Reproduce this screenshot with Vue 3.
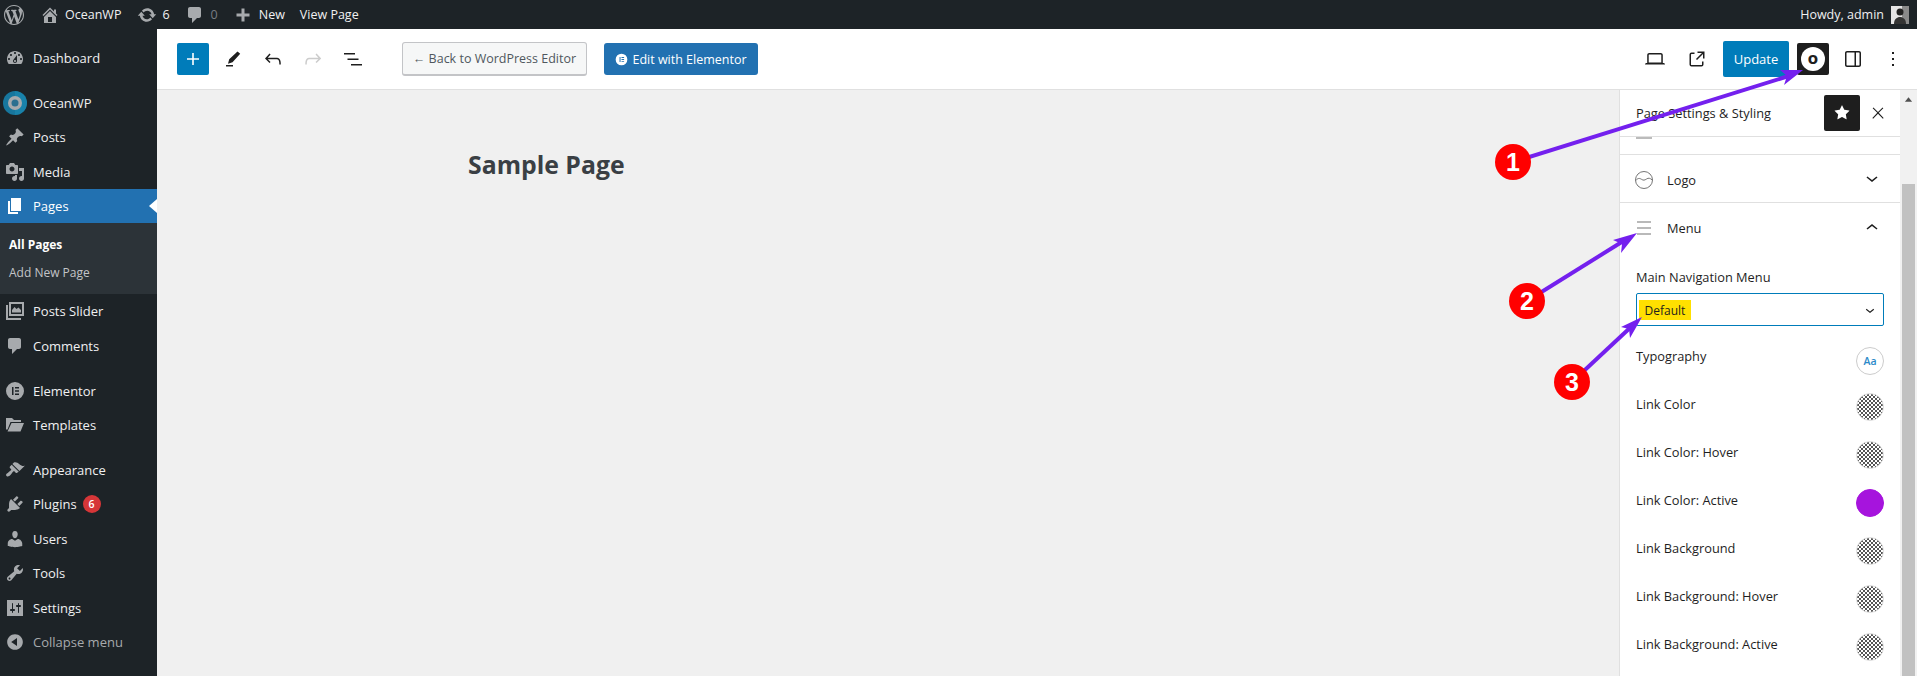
<script setup>
const ico = {
  dash: 'M3.76 16h12.48c1.1-1.37 1.76-3.11 1.76-5 0-4.42-3.58-8-8-8s-8 3.58-8 8c0 1.89.66 3.63 1.76 5zM10 4c.55 0 1 .45 1 1s-.45 1-1 1-1-.45-1-1 .45-1 1-1zM6 6c.55 0 1 .45 1 1s-.45 1-1 1-1-.45-1-1 .45-1 1-1zm8 0c.55 0 1 .45 1 1s-.45 1-1 1-1-.45-1-1 .45-1 1-1zm-5.37 5.55L12 7v6c0 1.1-.9 2-2 2s-2-.9-2-2c0-.57.24-1.08.63-1.45zM4 10c.55 0 1 .45 1 1s-.45 1-1 1-1-.45-1-1 .45-1 1-1zm12 0c.55 0 1 .45 1 1s-.45 1-1 1-1-.45-1-1 .45-1 1-1zm-5 3c0-.55-.45-1-1-1s-1 .45-1 1 .45 1 1 1 1-.45 1-1z',
  pin: 'M10.44 3.02l1.82-1.82 6.36 6.35-1.83 1.82c-1.05-.68-2.48-.57-3.41.36l-.75.75c-.92.93-1.04 2.35-.35 3.41l-1.83 1.82-2.41-2.41-2.8 2.79c-.42.42-3.38 2.71-3.8 2.29s1.86-3.39 2.28-3.81l2.79-2.79L4.1 9.36l1.83-1.82c1.05.69 2.48.57 3.4-.36l.75-.75c.93-.92 1.05-2.35.36-3.41z',
  media: 'M13 11V4c0-.55-.45-1-1-1h-1.67L9 1H5L3.67 3H2c-.55 0-1 .45-1 1v7c0 .55.45 1 1 1h10c.55 0 1-.45 1-1zM7 4.5c1.38 0 2.5 1.12 2.5 2.5S8.38 9.5 7 9.5 4.5 8.38 4.5 7 5.62 4.5 7 4.5zM14 6h5v10.5c0 1.38-1.12 2.5-2.5 2.5S14 17.88 14 16.5s1.12-2.5 2.5-2.5c.17 0 .34.02.5.05V9h-3V6zm-4 8.05V13h2v3.5c0 1.38-1.12 2.5-2.5 2.5S7 17.88 7 16.5 8.12 14 9.5 14c.17 0 .34.02.5.05z',
  page: 'M6 15V2h10v13H6zm-1 1h8v2H3V5h2v11z',
  slider: 'M4 1h15v14H4zM6 3v10h11V3zM7 9l2.500-3 2 2 2-1.500 2.500 2.500v2.500H7zM1 4h2v13h13v2H1z',
  comment: 'M5 2h9c1.100 0 2 .9 2 2v7c0 1.100-.9 2-2 2h-2l-5 5v-5H5c-1.100 0-2-.9-2-2V4c0-1.100.9-2 2-2z',
  elementor: 'M10 1a9 9 0 1 0 0 18 9 9 0 0 0 0-18zM7 6h1.500v8H7zM10 6h4v1.500h-4zM10 9.250h4v1.500h-4zM10 12.500h4V14h-4z',
  folder: 'M1 3h6l2 2h7v2H5.500L2.500 14.500H1zM6.500 8H19l-3.500 8.500H2.500z',
  brush: 'M14.480 11.060L7.410 3.990l1.500-1.500c.5-.56 2.300-.47 3.510.32 1.210.8 1.430 1.280 2.910 2.100 1.180.64 2.450 1.260 4.450.85zm-.71.71L6.700 4.700 4.930 6.470c-.39.39-.39 1.020 0 1.410l1.060 1.060c.39.39.39 1.030 0 1.420-.6.6-1.430 1.110-2.210 1.690-.35.26-.7.53-1.010.84C1.430 13.230.4 14.870 1.560 16.020c1.150 1.160 2.790.13 4.100-1.210.3-.3.58-.65.84-1 .58-.78 1.090-1.610 1.690-2.210.39-.39 1.030-.39 1.420 0l1.060 1.060c.39.39 1.020.39 1.410 0z',
  plug: 'M13.110 4.360L9.870 7.600 8 5.730l3.240-3.240c.35-.34 1.050-.2 1.560.32.52.51.66 1.210.31 1.550zm-8 1.770l.91-1.120 9.010 9.010-1.190.84c-.71.71-2.630 1.160-3.820 1.160H6.140L4.900 17.260c-.59.59-1.540.59-2.120 0-.59-.58-.59-1.530 0-2.120l1.240-1.240v-3.880c0-1.130.4-3.190 1.090-3.890zm7.260 3.970l3.240-3.240c.34-.35 1.040-.21 1.550.31.52.51.66 1.210.31 1.550l-3.240 3.250z',
  user: 'M10 9.250c-2.270 0-2.730-3.440-2.730-3.440C7 4.020 7.820 2 9.970 2c2.160 0 2.980 2.020 2.710 3.810 0 0-.41 3.440-2.680 3.440zm0 2.570L12.720 10c2.390 0 4.520 2.330 4.520 4.530v2.490s-3.650 1.130-7.240 1.130c-3.650 0-7.240-1.130-7.240-1.130v-2.490c0-2.250 1.940-4.480 4.470-4.480z',
  tool: 'M16.680 9.770c-1.340 1.340-3.300 1.670-4.950.99l-5.410 6.520c-.99.99-2.590.99-3.580 0s-.99-2.590 0-3.570l6.520-5.420c-.68-1.650-.35-3.610.99-4.950 1.280-1.280 3.120-1.620 4.720-1.060l-2.890 2.890 2.820 2.820 2.860-2.870c.53 1.580.18 3.390-1.080 4.650zM3.810 16.210c.4.39 1.040.39 1.430 0 .4-.4.4-1.040 0-1.430-.39-.4-1.030-.4-1.430 0-.39.39-.39 1.030 0 1.430z',
  settings: 'M2 2h16v16H2zM8 11V5.500c0-.28-.22-.5-.5-.5s-.5.22-.5.5V11H6c-.55 0-1 .45-1 1s.45 1 1 1h1v1.500c0 .28.22.5.5.5s.5-.22.5-.5V13h1c.55 0 1-.45 1-1s-.45-1-1-1zm5-2v5.500c0 .28.22.5.5.5s.5-.22.5-.5V9h1c.55 0 1-.45 1-1s-.45-1-1-1h-1V5.500c0-.28-.22-.5-.5-.5s-.5.22-.5.5V7h-1c-.55 0-1 .45-1 1s.45 1 1 1z',
  collapse: 'M10 2.160c4.330 0 7.840 3.510 7.840 7.840s-3.510 7.840-7.840 7.840S2.160 14.330 2.160 10 5.710 2.160 10 2.160zm2 11.720V6.120L6.180 9.970z'
}
const wp = 'M20 10c0-5.510-4.490-10-10-10C4.480 0 0 4.490 0 10c0 5.520 4.480 10 10 10 5.510 0 10-4.480 10-10zM7.780 15.370L4.370 6.220c.55-.02 1.170-.08 1.170-.08.5-.06.44-1.130-.06-1.110 0 0-1.450.11-2.370.11-.18 0-.37 0-.58-.01C4.120 2.690 6.870 1.110 10 1.110c2.330 0 4.450.87 6.050 2.340-.68-.11-1.650.39-1.650 1.580 0 .74.45 1.360.9 2.100.35.61.55 1.360.55 2.460 0 1.490-1.400 5-1.400 5l-3.030-8.370c.54-.02.82-.17.82-.17.5-.05.44-1.250-.06-1.220 0 0-1.440.12-2.380.12-.87 0-2.330-.12-2.330-.12-.5-.03-.56 1.200-.06 1.220l.92.08 1.260 3.410zM17.410 10c.24-.64.74-1.870.43-4.250.7 1.290 1.050 2.710 1.050 4.250 0 3.290-1.730 6.240-4.400 7.780.97-2.590 1.940-5.200 2.920-7.780zM6.100 18.090C3.120 16.650 1.110 13.530 1.110 10c0-1.300.23-2.480.72-3.590C3.250 10.300 4.670 14.200 6.100 18.090zm4.030-6.630l2.580 6.980c-.86.29-1.760.45-2.710.45-.79 0-1.570-.11-2.290-.33.81-2.380 1.620-4.740 2.420-7.100z'
const home = 'M16 8.500l1.530 1.530-1.060 1.060L10 4.620l-6.470 6.470-1.060-1.060L10 2.500l4 4v-2h2v4zm-6-2.460l6 5.990V18H4v-5.970zM12 17v-5H8v5h4z'
const update = 'M10.200 3.280c3.530 0 6.430 2.610 6.920 6h2.080l-3.500 4-3.500-4h2.320c-.45-1.970-2.210-3.450-4.320-3.450-1.450 0-2.730.71-3.540 1.780L4.950 5.660C6.230 4.200 8.110 3.280 10.200 3.280zm-.4 13.440c-3.520 0-6.430-2.610-6.920-6H.8l3.500-4c1.170 1.330 2.330 2.670 3.500 4H5.480c.45 1.970 2.210 3.450 4.320 3.450 1.450 0 2.730-.71 3.540-1.780l1.710 1.950c-1.280 1.460-3.150 2.380-5.250 2.380z'
const plusBar = 'M3.500 8.500h5v-5h3v5h5v3h-5v5h-3v-5h-5z'

const top = [
  { label: 'Dashboard', icon: ico.dash },
  { label: 'OceanWP', ocean: true, gap: true },
  { label: 'Posts', icon: ico.pin },
  { label: 'Media', icon: ico.media },
  { label: 'Pages', icon: ico.page, active: true }
]
const bottom = [
  { label: 'Posts Slider', icon: ico.slider },
  { label: 'Comments', icon: ico.comment },
  { label: 'Elementor', icon: ico.elementor, gap: true },
  { label: 'Templates', icon: ico.folder },
  { label: 'Appearance', icon: ico.brush, gap: true },
  { label: 'Plugins', icon: ico.plug, badge: '6' },
  { label: 'Users', icon: ico.user },
  { label: 'Tools', icon: ico.tool },
  { label: 'Settings', icon: ico.settings },
  { label: 'Collapse menu', icon: ico.collapse, dim: true }
]
const options = [
  { label: 'Link Color' },
  { label: 'Link Color: Hover' },
  { label: 'Link Color: Active', solid: true },
  { label: 'Link Background' },
  { label: 'Link Background: Hover' },
  { label: 'Link Background: Active' }
]
const arrows = [
  { n: '1', cx: 1513, cy: 162, line: '1513,162 1792,75', head: '1803,70 1780,70 1787,76 1784,85' },
  { n: '2', cx: 1527, cy: 301, line: '1527,301 1625,240', head: '1637,233 1613,240 1622,244 1621,253' },
  { n: '3', cx: 1572, cy: 382, line: '1572,382 1632,326', head: '1642,317 1621,327 1629,329 1630,338' }
]
</script>

<template>
  <div class="page">
    <header class="bar">
      <svg class="wp" viewBox="0 0 20 20"><path :d="wp" fill-rule="evenodd" /></svg>
      <span class="bar-item home"><svg viewBox="0 0 20 20"><path :d="home" fill-rule="evenodd" /></svg><b>OceanWP</b></span>
      <span class="bar-item upd"><svg viewBox="0 0 20 20"><path :d="update" /></svg><b>6</b></span>
      <span class="bar-item cmt"><svg viewBox="0 0 20 20"><path :d="ico.comment" /></svg><b class="zero">0</b></span>
      <span class="bar-item new"><svg viewBox="0 0 20 20"><path :d="plusBar" /></svg><b>New</b></span>
      <span class="bar-item view"><b>View Page</b></span>
      <span class="howdy">Howdy, admin
        <svg class="avatar" viewBox="0 0 18 18">
          <rect width="18" height="18" fill="#e4e4e4" />
          <rect x="11" width="7" height="18" fill="#8a8a8a" />
          <circle cx="9" cy="6" r="3.500" fill="#222" />
          <path d="M3 18c0-5 3-7 6-7s6 2 6 7z" fill="#333" />
        </svg>
      </span>
    </header>

    <div class="body">
      <nav class="side">
        <a v-for="m in top" :key="m.label" class="item" :class="{ gap: m.gap, active: m.active }">
          <span class="ic">
            <svg v-if="m.ocean" class="ocean" viewBox="0 0 24 24">
              <circle cx="12" cy="12" r="12" fill="#17769d" />
              <path d="M12 0a12 12 0 0 1 0 24z" fill="#1b8ab3" opacity=".6" />
              <circle cx="12" cy="12" r="7" fill="#a7aaad" />
              <circle cx="12" cy="12" r="3.500" fill="#2c6f8f" />
            </svg>
            <svg v-else viewBox="0 0 20 20"><path :d="m.icon" fill-rule="evenodd" /></svg>
          </span>
          <span class="lbl">{{ m.label }}</span>
        </a>
        <div class="sub">
          <a class="cur">All Pages</a>
          <a>Add New Page</a>
        </div>
        <a v-for="m in bottom" :key="m.label" class="item" :class="{ gap: m.gap, dim: m.dim }">
          <span class="ic"><svg viewBox="0 0 20 20"><path :d="m.icon" fill-rule="evenodd" /></svg></span>
          <span class="lbl">{{ m.label }}</span>
          <span v-if="m.badge" class="badge">{{ m.badge }}</span>
        </a>
      </nav>

      <div class="main">
        <div class="tb">
          <div class="tb-left">
            <button class="add"><svg viewBox="0 0 24 24"><path d="M18 11.200h-5.200V6h-1.600v5.200H6v1.600h5.200V18h1.600v-5.200H18z" /></svg></button>
            <svg class="ti first" viewBox="0 0 24 24"><path d="M16.500 4.500l2.700 2.300-7.700 8.500-4.500 1.500 1.200-4.500zM5 18h7v1.500H5z" /></svg>
            <svg class="ti" viewBox="0 0 24 24"><path d="M18.300 11.700c-.6-.6-1.400-.9-2.300-.9H6.700l2.900-3.300-1.100-1-4.500 5L8.500 16l1-1-2.700-2.700H16c.5 0 .9.2 1.300.5 1 1 1 3.400 1 4.500v.3h1.500v-.2c0-1.500 0-4.300-1.500-5.700z" /></svg>
            <svg class="ti off" viewBox="0 0 24 24"><path d="M15.600 6.500l-1.100 1 2.900 3.300H8c-.9 0-1.700.3-2.300.9-1.400 1.500-1.400 4.200-1.400 5.600v.2h1.500v-.3c0-1.100 0-3.500 1-4.500.3-.3.7-.5 1.300-.5h9.200L14.500 15l1.100 1.100 4.600-4.600-4.600-5z" /></svg>
            <svg class="ti" viewBox="0 0 24 24"><path d="M3 6h11v1.500H3V6zm3.500 5.500h11V13h-11v-1.500zM21 17H10v1.500h11V17z" /></svg>
            <button class="back">← Back to WordPress Editor</button>
            <button class="elem">
              <svg viewBox="0 0 20 20"><path :d="ico.elementor" fill-rule="evenodd" /></svg>Edit with Elementor
            </button>
          </div>
          <div class="tb-right">
            <svg class="ti" viewBox="0 0 24 24"><path d="M20.500 16h-.7V8c0-1.100-.9-2-2-2H6.200c-1.100 0-2 .9-2 2v8h-.7c-.8 0-1.500.7-1.500 1.500h20c0-.8-.7-1.500-1.500-1.500zM5.700 8c0-.3.2-.5.500-.5h11.600c.3 0 .5.2.5.5v7.600H5.700V8z" /></svg>
            <svg class="ti ext" viewBox="0 0 24 24"><path d="M19.500 4.500h-7V6h4.440l-5.970 5.970 1.060 1.060L18 7.060v4.440h1.500v-7Zm-13 1a2 2 0 0 0-2 2v10a2 2 0 0 0 2 2h10a2 2 0 0 0 2-2v-3H17v3a.5.5 0 0 1-.5.5h-10a.5.5 0 0 1-.5-.5v-10a.5.5 0 0 1 .5-.5h3V5.500h-3Z" /></svg>
            <button class="update">Update</button>
            <button class="ocean-btn"><span>O</span></button>
            <svg class="ti pane" viewBox="0 0 24 24"><path d="M18 4H6c-1.100 0-2 .9-2 2v12c0 1.100.9 2 2 2h12c1.100 0 2-.9 2-2V6c0-1.100-.9-2-2-2zM6 18.500c-.3 0-.5-.2-.5-.5V6c0-.3.2-.5.500-.5h7.500v13H6zM18.500 18c0 .3-.2.5-.5.5h-3v-13h3c.3 0 .5.2.5.5v12z" /></svg>
            <svg class="ti more" viewBox="0 0 24 24"><path d="M13 19h-2v-2h2v2zm0-6h-2v-2h2v2zm0-6h-2V5h2v2z" /></svg>
          </div>
        </div>

        <div class="work">
          <div class="canvas"><h1>Sample Page</h1></div>
          <aside class="panel">
            <div class="p-inner">
              <div class="p-head">
                <span>Page Settings &amp; Styling</span>
                <button class="star"><svg viewBox="0 0 24 24"><path d="M11.776 4.454a.25.25 0 01.448 0l2.069 4.192a.25.25 0 00.188.137l4.626.672a.25.25 0 01.139.426l-3.348 3.263a.25.25 0 00-.072.222l.79 4.607a.25.25 0 01-.362.263l-4.138-2.175a.25.25 0 00-.232 0l-4.138 2.175a.25.25 0 01-.363-.263l.79-4.607a.25.25 0 00-.071-.222L4.754 9.881a.25.25 0 01.139-.426l4.626-.672a.25.25 0 00.188-.137l2.069-4.192z" /></svg></button>
                <svg class="close" viewBox="0 0 24 24"><path d="M13 11.800l6.100-6.300-1-1-6.100 6.200-6.100-6.200-1 1 6.100 6.300-6.500 6.700 1 1 6.500-6.600 6.500 6.600 1-1z" /></svg>
              </div>
              <div class="p-cut"><i></i></div>
              <div class="p-row">
                <svg class="r-ic" viewBox="0 0 18 18"><circle cx="9" cy="9" r="8.500" fill="none" stroke="#757575" stroke-width="1" /><path d="M.8 9.500c2-2.500 3.700-2.500 5.700-1.200s3 1 5-.3 3.500-1 5.700 1" fill="none" stroke="#757575" stroke-width="1" /></svg>
                <span>Logo</span>
                <svg class="chev" viewBox="0 0 24 24"><path d="M17.500 10.600L12 15l-5.500-4.400.9-1.200L12 13l4.500-3.600z" /></svg>
              </div>
              <div class="p-row open">
                <svg class="r-ic" viewBox="0 0 18 18"><path d="M2 2.500h14v1H2zM2 8.500h14v1H2zM2 14.500h14v1H2z" fill="#757575" /></svg>
                <span>Menu</span>
                <svg class="chev" viewBox="0 0 24 24"><path d="M6.500 12.400L12 8l5.500 4.400-.9 1.200L12 10l-4.500 3.600z" /></svg>
              </div>
              <div class="p-body">
                <label>Main Navigation Menu</label>
                <div class="select">
                  <span class="mark">Default</span>
                  <svg viewBox="0 0 24 24"><path d="M17.500 11.600L12 16l-5.500-4.400.9-1.200L12 14l4.500-3.600z" /></svg>
                </div>
                <div class="opt typo"><span>Typography</span><i class="aa">Aa</i></div>
                <div v-for="o in options" :key="o.label" class="opt">
                  <span>{{ o.label }}</span>
                  <i class="sw" :class="{ solid: o.solid }"></i>
                </div>
              </div>
            </div>
            <div class="scroll">
              <svg class="up" viewBox="0 0 10 6"><path d="M5 0l4 5H1z" /></svg>
              <div class="thumb"></div>
            </div>
          </aside>
        </div>
      </div>
    </div>

    <svg class="marks" viewBox="0 0 1917 676">
      <g v-for="a in arrows" :key="a.n">
        <polyline :points="a.line" fill="none" stroke="#7420ee" stroke-width="4" />
        <polygon :points="a.head" fill="#7420ee" />
        <circle :cx="a.cx" :cy="a.cy" r="18" fill="#f00" />
        <text :x="a.cx" :y="a.cy + 9" text-anchor="middle" class="num">{{ a.n }}</text>
      </g>
    </svg>
  </div>
</template>

<style>
html, body { margin: 0; background: #f0f0f0; overflow: hidden; }
</style>

<style scoped>
.page { position: relative; width: 1917px; height: 676px; overflow: hidden; font-family: "Open Sans", "Noto Sans", sans-serif; font-size: 13px; color: #1e1e1e; }
svg { display: block; flex: none; }
button { font-family: inherit; border: 0; padding: 0; }

.bar { height: 29px; background: #1d2327; color: #f0f0f1; display: flex; align-items: center; font-size: 12.500px; }
.bar svg { fill: #a7aaad; }
.bar b { font-weight: 400; }
.wp { width: 20px; height: 20px; margin-left: 4px; }
.bar-item { display: flex; align-items: center; }
.bar-item svg { width: 20px; height: 20px; }
.home { margin-left: 15.500px; gap: 5.500px; }
.upd { margin-left: 16px; gap: 5px; }
.cmt { margin-left: 15px; gap: 6px; }
.cmt .zero { color: #787c82; }
.new { margin-left: 15.500px; gap: 5.500px; }
.view { margin-left: 15px; }
.howdy { margin-left: auto; margin-right: 8px; display: flex; align-items: center; gap: 7px; }
.avatar { width: 18px; height: 18px; }

.body { display: flex; height: 647px; }
.side { width: 157px; flex: none; background: #1d2327; padding-top: 11.600px; box-sizing: border-box; }
.item { display: flex; align-items: center; height: 34.400px; color: #f0f0f1; position: relative; }
.item.gap { margin-top: 10.600px; }
.item.dim { color: #a7aaad; }
.ic { width: 33px; display: flex; justify-content: center; flex: none; padding-right: 3px; box-sizing: border-box; }
.ic svg { width: 20px; height: 20px; fill: #a7aaad; }
.ic .ocean { width: 24px; height: 24px; }
.active { background: #2271b1; color: #fff; }
.active .ic svg { fill: #fff; }
.active::after { content: ""; position: absolute; right: 0; top: 10px; border: 7.500px solid transparent; border-left-width: 0; border-right: 8px solid #fff; }
.sub { background: #2c3338; height: 71px; padding-top: 8px; box-sizing: border-box; font-size: 12px; color: #c3c4c7; }
.sub a { display: flex; align-items: center; height: 27.500px; padding-left: 9px; }
.sub .cur { color: #fff; font-weight: 700; }
.badge { margin-left: 6px; width: 18px; height: 18px; border-radius: 50%; background: #d63638; color: #fff; font-size: 10.500px; font-weight: 600; display: flex; align-items: center; justify-content: center; }

.main { flex: 1; display: flex; flex-direction: column; min-width: 0; }
.tb { height: 60px; flex: none; background: #fff; border-bottom: 1px solid #e0e0e0; display: flex; justify-content: space-between; align-items: center; padding: 0 0 0 20px; }
.tb-left, .tb-right { display: flex; align-items: center; }
.ti { width: 24px; height: 24px; fill: #1e1e1e; margin-left: 16px; }
.ti.off { fill: #ccc; }
.add { width: 32px; height: 32px; background: #007cba; border-radius: 2px; display: flex; align-items: center; justify-content: center; }
.add svg { width: 24px; height: 24px; fill: #fff; }
.ti.first { margin-left: 12px; }
.back { margin-left: 37px; width: 185px; height: 34px; box-sizing: border-box; background: #f6f7f7; border: 1px solid #c3c4c7; border-bottom-width: 2px; border-radius: 3px; color: #50575e; font-size: 12.500px; }
.elem { margin-left: 17px; width: 154px; height: 32px; background: #2271b1; color: #fff; border-radius: 3px; font-size: 12.500px; display: flex; align-items: center; justify-content: center; gap: 4px; }
.elem svg { width: 13px; height: 13px; fill: #fff; }
.tb-right { padding-right: 12px; }
.ext { margin-left: 18px; }
.update { margin-left: 14px; width: 66px; height: 36px; background: #007cba; color: #fff; border-radius: 2px; font-size: 13px; }
.ocean-btn { margin-left: 8px; width: 32px; height: 32px; background: #1e1e1e; border-radius: 2px; display: flex; align-items: center; justify-content: center; }
.ocean-btn span { width: 24px; height: 24px; background: #fff; border-radius: 50%; color: #1e1e1e; font-weight: 800; font-size: 13px; line-height: 24px; text-align: center; }
.pane { margin-left: 12px; }
.more { margin-left: 16px; }

.work { flex: 1; display: flex; min-height: 0; }
.canvas { flex: 1; background: #f0f0f0; padding: 56px 0 0 311px; }
h1 { margin: 0; font-size: 24.800px; line-height: 36px; font-weight: 700; color: #3a3f44; }
.panel { width: 298px; flex: none; display: flex; background: #fff; border-left: 1px solid #e0e0e0; box-sizing: border-box; }
.p-inner { flex: 1; min-width: 0; font-size: 12.800px; }
.p-head { height: 46px; display: flex; align-items: center; padding: 0 13px 0 16px; border-bottom: 1px solid #e0e0e0; color: #1e1e1e; }
.p-head > span { flex: 1; }
.star { width: 36px; height: 36px; background: #1e1e1e; border-radius: 2px; display: flex; align-items: center; justify-content: center; }
.star svg { width: 24px; height: 24px; fill: #fff; }
.close { width: 18px; height: 18px; margin-left: 9px; fill: #1e1e1e; }
.p-cut { height: 17px; border-bottom: 1px solid #e0e0e0; padding-left: 16px; }
.p-cut i { display: block; width: 16px; height: 2px; background: #bbb; }
.p-row { height: 47px; box-sizing: content-box; display: flex; align-items: center; padding: 0 16px 0 16px; border-bottom: 1px solid #e0e0e0; color: #1e1e1e; }
.p-row.open { border-bottom: 0; height: 50px; }
.p-row > span { flex: 1; margin-left: 14px; position: relative; top: 1px; }
.p-row.open > span { top: 0; }
.r-ic { width: 18px; height: 18px; margin-left: -1px; position: relative; top: 1px; }
.open .r-ic { top: 0; }
.chev { width: 24px; height: 24px; fill: #1e1e1e; }
.p-body { padding: 14px 16px 0; }
label { display: block; line-height: 20px; }
.select { margin-top: 6px; height: 33px; box-sizing: border-box; border: 1.500px solid #007cba; border-radius: 2px; display: flex; align-items: center; justify-content: space-between; padding: 0 4px 0 1.500px; }
.select svg { width: 18px; height: 18px; fill: #1e1e1e; }
.mark { background: #ffe000; padding: 1px 6px 0; line-height: 19px; font-size: 12px; }
.opt { height: 48px; display: flex; align-items: center; justify-content: space-between; }
.opt > span { position: relative; top: -3px; }
.typo { margin-top: 12px; height: 45px; }
.typo > span { top: -5px; }
.aa { width: 28px; height: 28px; box-sizing: border-box; border: 1px solid #ccc; border-radius: 50%; font-style: normal; font-size: 10.500px; font-weight: 600; color: #2c8ac9; display: flex; align-items: center; justify-content: center; }
.sw { width: 28px; height: 28px; border-radius: 50%; border: 1px solid #ddd; box-sizing: border-box; background: repeating-conic-gradient(#555 0 25%, #fff 0 50%) 0 0 / 4px 4px; }
.sw.solid { background: #a614dd; border-color: #a614dd; }
.scroll { width: 17px; flex: none; background: #f1f1f1; display: flex; flex-direction: column; align-items: center; }
.up { width: 9px; height: 6px; margin-top: 7px; fill: #505050; }
.thumb { width: 13px; flex: 1; margin-top: 81px; background: #c1c1c1; }

.marks { position: absolute; left: 0; top: 0; width: 1917px; height: 676px; pointer-events: none; }
.num { font-family: "Liberation Sans", sans-serif; font-weight: 700; font-size: 25px; fill: #fff; }
</style>
